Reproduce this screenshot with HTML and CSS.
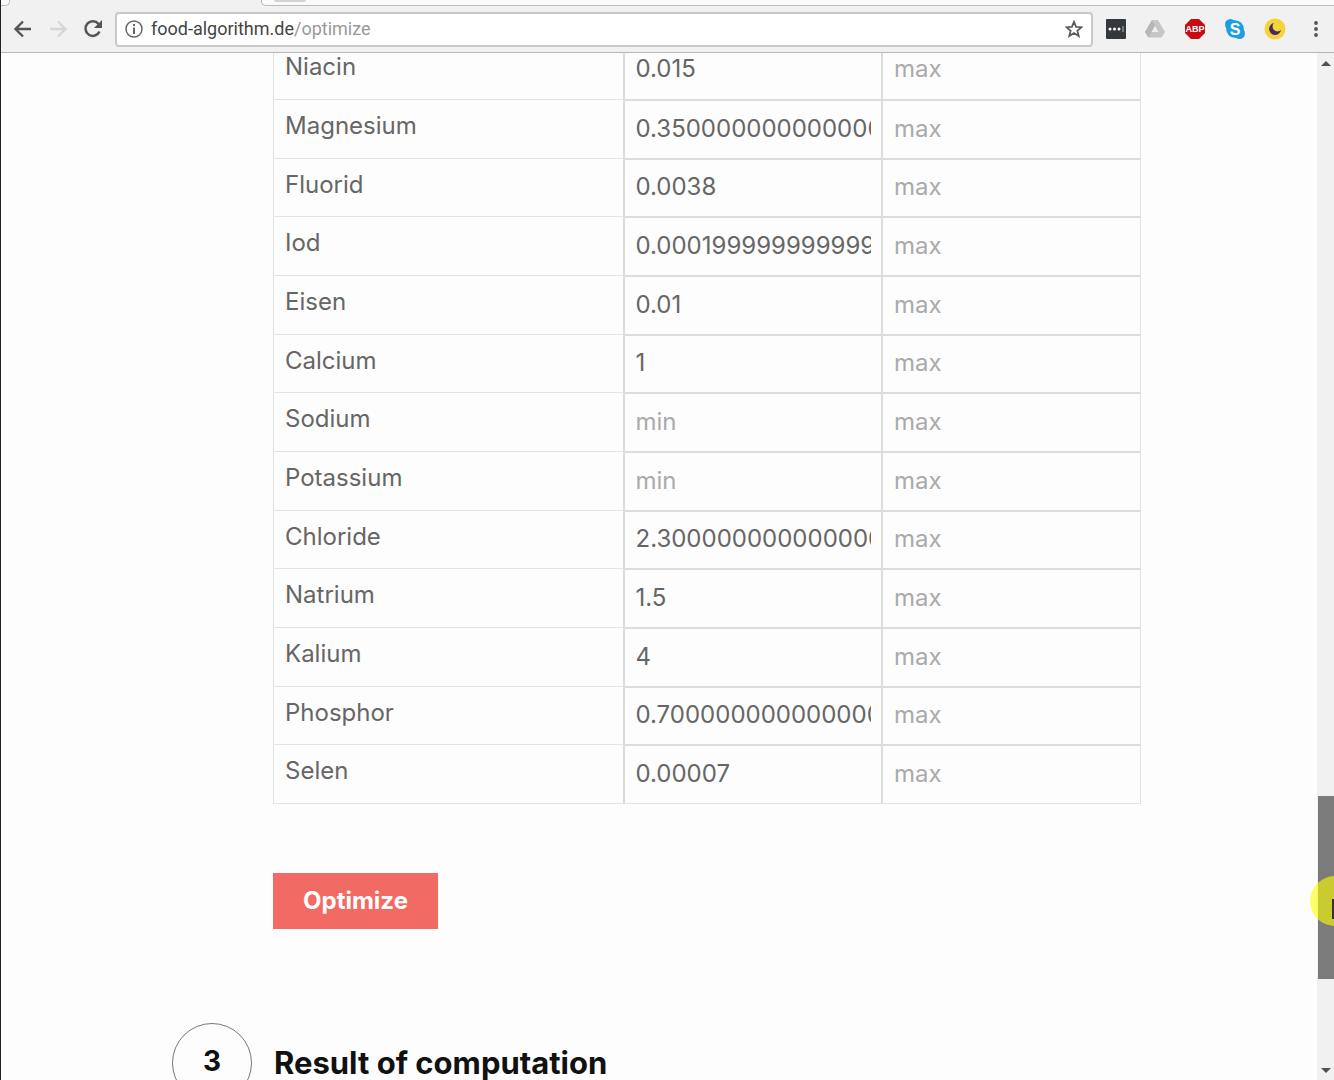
FILE: index.html
```html
<!DOCTYPE html>
<html lang="en">
<head>
    <meta charset="UTF-8">
    <meta name="viewport" content="width=device-width, initial-scale=1.0">
    <title>Food Algorithm</title>
    <link rel="stylesheet" href="styles.css">
</head>
<body>
    <header class="browser">
        <div class="tab-strip">
            <div class="tab-prev"></div>
            <div class="tab-active"></div>
            <div class="tab-rest"><span class="new-tab"></span></div>
        </div>
        <div class="toolbar">
            <button class="tool" aria-label="Back">
                <svg width="20" height="20" viewBox="0 0 20 20" fill="none" stroke="#555" stroke-width="2.400"><path d="M18 10H3M10 2.500L2.500 10L10 17.500"/></svg>
            </button>
            <button class="tool" aria-label="Forward" disabled>
                <svg width="20" height="20" viewBox="0 0 20 20" fill="none" stroke="#d6d6d6" stroke-width="2.400"><path d="M2 10H17M10 2.500L17.500 10L10 17.500"/></svg>
            </button>
            <button class="tool" aria-label="Reload">
                <svg width="20" height="20" viewBox="0 0 20 20"><path d="M16.500 12.500A7.300 7.300 0 1 1 15.500 5" fill="none" stroke="#555" stroke-width="2.500"/><path d="M19 1V9H11Z" fill="#555"/></svg>
            </button>
            <div class="address">
                <svg width="18" height="18" viewBox="0 0 18 18"><circle cx="9" cy="9" r="8" fill="none" stroke="#666" stroke-width="1.500"/><path d="M9 7.500V14M9 4V6" stroke="#666" stroke-width="2"/></svg>
                <a class="url" href="#">food-algorithm.de<span class="path">/optimize</span></a>
                <button class="star" aria-label="Bookmark">
                    <svg width="18" height="18" viewBox="0 0 18 18"><path d="M9 1.800L11.100 6.800L16.500 7.200L12.400 10.700L13.700 16L9 13.100L4.300 16L5.600 10.700L1.500 7.200L6.900 6.800Z" fill="none" stroke="#5a5a5a" stroke-width="1.800"/></svg>
                </button>
            </div>
            <div class="extensions">
                <button class="tool" aria-label="Password manager">
                    <svg width="20" height="20" viewBox="0 0 20 20"><rect width="20" height="20" rx="1" fill="#32383c"/><g fill="#fff"><circle cx="4" cy="10" r="1.500"/><circle cx="8.500" cy="10" r="1.500"/><circle cx="13" cy="10" r="1.500"/></g><path d="M17 7V13" stroke="#bbb"/></svg>
                </button>
                <button class="tool" aria-label="Drive">
                    <svg width="20" height="20" viewBox="0 0 20 20"><path d="M7 1H13L20 13L16.500 18.500H3.500L0 13Z" fill="#c6c6c6"/><path d="M7 1L10 6L3.500 18.500L0 13Z" fill="#b7b7b7"/><path d="M10 7L13.500 13H6.500Z" fill="#eee"/></svg>
                </button>
                <button class="tool" aria-label="Adblock Plus">
                    <svg width="22" height="22" viewBox="0 0 22 22"><path d="M7 1H15L21 7V15L15 21H7L1 15V7Z" fill="#c70d12"/><text class="abp" x="11" y="14" text-anchor="middle">ABP</text></svg>
                </button>
                <button class="tool" aria-label="Skype">
                    <svg width="20" height="20" viewBox="0 0 20 20"><g fill="#1b9fe0"><circle cx="10" cy="10" r="8.800"/><circle cx="5.500" cy="5.500" r="5.500"/><circle cx="14.500" cy="14.500" r="5.500"/></g><text class="skype" x="10" y="15.500" text-anchor="middle">S</text></svg>
                </button>
                <button class="tool" aria-label="Night mode">
                    <svg width="22" height="22" viewBox="0 0 22 22"><circle cx="11" cy="11" r="10.500" fill="#f6d33c"/><path d="M10 5A6 6 0 1 0 17 12A4.800 4.800 0 0 1 10 5Z" fill="#452b5e"/></svg>
                </button>
            </div>
            <button class="tool menu" aria-label="Menu">
                <svg width="6" height="18" viewBox="0 0 6 18" fill="#555"><circle cx="3" cy="3" r="1.900"/><circle cx="3" cy="9" r="1.900"/><circle cx="3" cy="15" r="1.900"/></svg>
            </button>
        </div>
    </header>

    <div class="viewport">
        <main class="page">
            <form class="content" onsubmit="return false">
                <table class="nutrients">
                    <colgroup><col class="col-name"><col class="col-limit"><col class="col-limit"></colgroup>
                    <tbody id="nutrient-rows"></tbody>
                </table>
                <button class="optimize" type="submit">Optimize</button>
            </form>
            <section class="step">
                <span class="step-number">3</span>
                <h2>Result of computation</h2>
            </section>
        </main>
        <div class="scrollbar">
            <span class="arrow-up"></span>
            <div class="track"><div class="thumb"><span class="highlight"></span><span class="pointer"></span></div></div>
            <span class="arrow-down"></span>
        </div>
    </div>

    <script>
        const nutrients = [
            ["Niacin", "0.015"],
            ["Magnesium", "0.35000000000000003"],
            ["Fluorid", "0.0038"],
            ["Iod", "0.00019999999999999998"],
            ["Eisen", "0.01"],
            ["Calcium", "1"],
            ["Sodium", ""],
            ["Potassium", ""],
            ["Chloride", "2.3000000000000003"],
            ["Natrium", "1.5"],
            ["Kalium", "4"],
            ["Phosphor", "0.7000000000000001"],
            ["Selen", "0.00007"]
        ];

        document.getElementById("nutrient-rows").innerHTML = nutrients.map(([name, min]) => `
            <tr>
                <th scope="row"><label for="min-${name}">${name}</label></th>
                <td><input type="text" id="min-${name}" placeholder="min" value="${min}"></td>
                <td><input type="text" aria-label="${name} max" placeholder="max"></td>
            </tr>`).join("");
    </script>
</body>
</html>
```
FILE: styles.css
```css
* {
    box-sizing: border-box;
}

body {
    margin: 0;
    height: 100vh;
    display: flex;
    flex-direction: column;
    overflow: hidden;
    border-left: 1px solid #222;
    background: #fdfdfd;
    color: #666;
    font-family: Inter, "Open Sans", sans-serif;
}

button {
    border: 0;
    padding: 0;
    background: none;
    font-family: inherit;
}

svg {
    display: block;
}

/* browser bar */
.browser {
    flex: none;
    background: #f1f1f1;
    border-bottom: 1px solid #b5b5b5;
}

.tab-strip {
    display: flex;
    height: 6px;
}

.tab-prev {
    width: 9px;
    background: #fafafa;
    border-bottom: 1px solid #bbb;
    border-right: 1px solid #bbb;
    border-bottom-right-radius: 5px;
}

.tab-active {
    width: 251px;
}

.tab-rest {
    flex: 1;
    background: #fafafa;
    border-bottom: 1px solid #bbb;
    border-left: 1px solid #bbb;
    border-bottom-left-radius: 5px;
}

.new-tab {
    display: block;
    width: 32px;
    height: 2px;
    margin-left: 12px;
    background: #d4d4d4;
    border-radius: 0 0 4px 4px;
}

.toolbar {
    display: flex;
    align-items: center;
    height: 46px;
    padding: 0 15px 0 12px;
}

.toolbar > .tool {
    margin-right: 15px;
}

.address {
    flex: 1;
    display: flex;
    align-items: center;
    height: 35px;
    padding: 0 8px;
    margin-left: -3px;
    background: #fff;
    border: 2px solid #c8c8c8;
    border-radius: 4px;
}

.url {
    flex: 1;
    margin-left: 8px;
    color: #444;
    font-family: Roboto, sans-serif;
    font-size: 18px;
    line-height: 20px;
    text-decoration: none;
}

.path {
    color: #999;
}

.extensions {
    display: flex;
    align-items: center;
    gap: 19px;
    margin: 0 27px 0 13px;
}

.toolbar > .menu {
    margin: 0;
}

.abp {
    fill: #fff;
    font: bold 9px "Liberation Sans", sans-serif;
}

.skype {
    fill: #fff;
    font: bold 16px "Liberation Sans", sans-serif;
}

/* page */
.viewport {
    flex: 1;
    display: flex;
    min-height: 0;
}

.page {
    flex: 1;
    overflow: hidden;
}

.content {
    width: 868px;
    max-width: 80%;
    margin: -13px 0 0 272px;
}

.nutrients {
    width: 100%;
    table-layout: fixed;
    border-collapse: collapse;
    border: 1px solid #e2e2e2;
}

.col-name {
    width: 350px;
}

.nutrients tr {
    height: 59px;
}

.nutrients tr:nth-child(3n) {
    height: 58px;
}

.nutrients th,
.nutrients td {
    padding: 0;
    border-bottom: 1px solid #e4e4e4;
}

.nutrients th {
    padding: 12px 11px 0;
    font-size: 24px;
    font-weight: 400;
    line-height: 28px;
    text-align: left;
    vertical-align: top;
}

.nutrients td {
    border-left: 2px solid #dcdcdc;
    border-bottom: 2px solid #dcdcdc;
}

.nutrients tr:last-child td {
    border-bottom: 1px solid #e4e4e4;
}

.nutrients input {
    display: block;
    width: 100%;
    height: 56px;
    padding: 0 10px 2px 11px;
    border: 0;
    background: transparent;
    color: #666;
    font-family: inherit;
    font-size: 24px;
}

.nutrients input::placeholder {
    color: #aaa;
}

.optimize {
    display: block;
    width: 165px;
    height: 56px;
    padding-bottom: 2px;
    margin-top: 69px;
    background: #f26a64;
    color: #fff;
    font-size: 24px;
    font-weight: 700;
}

.step {
    display: flex;
    align-items: center;
    gap: 22px;
    margin: 94px 0 0 171px;
    color: #111;
}

.step-number {
    display: flex;
    align-items: center;
    justify-content: center;
    width: 80px;
    height: 80px;
    padding-bottom: 4px;
    border: 1px solid #777;
    border-radius: 50%;
    font-size: 28px;
    font-weight: 700;
}

.step h2 {
    margin: 0;
    padding-bottom: 2px;
    font-size: 31px;
    font-weight: 700;
}

/* scrollbar */
.scrollbar {
    flex: none;
    display: flex;
    flex-direction: column;
    width: 17px;
    padding: 8px 0 7px;
    background: #f1f1f1;
}

.arrow-up,
.arrow-down {
    align-self: flex-end;
    margin-right: 3px;
    border: 5px solid transparent;
}

.arrow-up {
    border-top: 0;
    border-bottom-color: #505050;
}

.arrow-down {
    border-bottom: 0;
    border-top-color: #505050;
}

.track {
    flex: 1;
    display: flex;
    flex-direction: column;
    justify-content: flex-end;
    padding-bottom: 89px;
}

.thumb {
    position: relative;
    height: 183px;
    margin-left: 1px;
    background: #7b7b7b;
}

.highlight {
    position: absolute;
    top: 80px;
    left: -8px;
    width: 50px;
    height: 50px;
    border-radius: 50%;
    background: #ffff00;
    opacity: 0.6;
}

.pointer {
    position: absolute;
    top: 103px;
    right: 0;
    width: 2px;
    height: 20px;
    background: #333;
}
```
